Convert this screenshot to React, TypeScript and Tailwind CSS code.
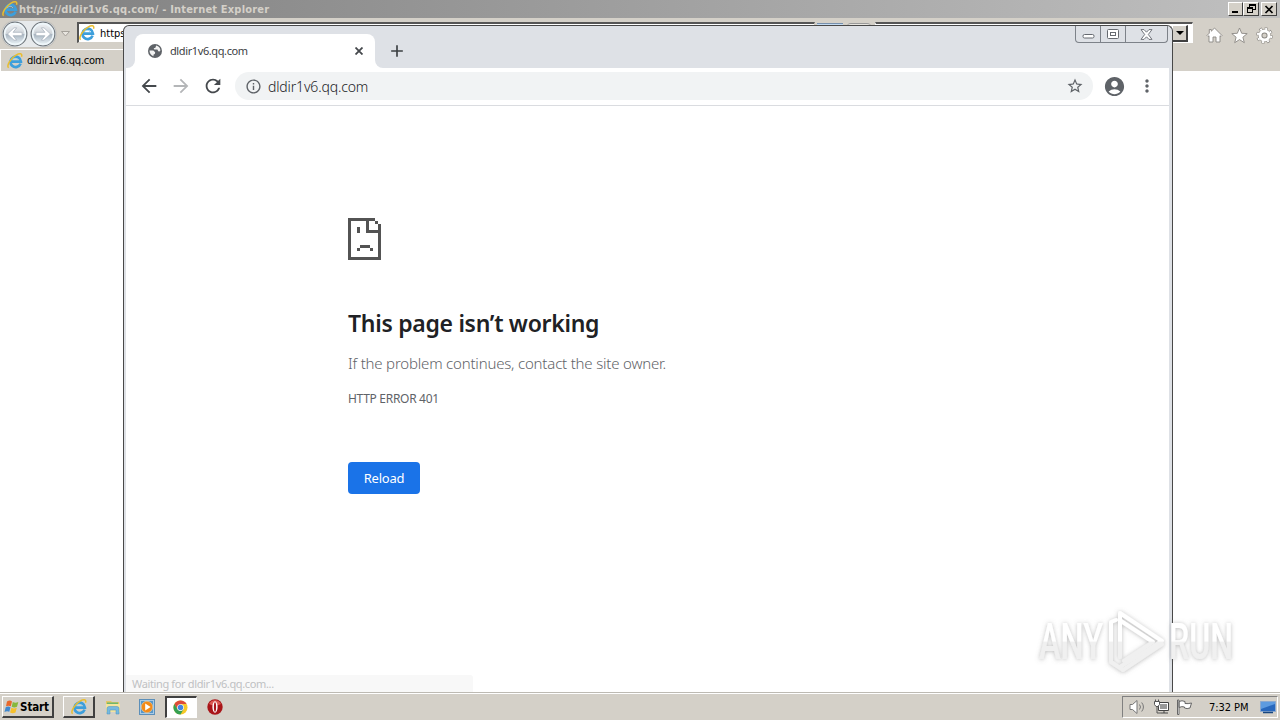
import type { ReactNode } from 'react';
import {
  MdAccountCircle,
  MdAdd,
  MdArrowBack,
  MdArrowForward,
  MdInfoOutline,
  MdMoreVert,
  MdRefresh,
  MdStarBorder,
} from 'react-icons/md';

const HOST = 'dldir1v6.qq.com';

function IeIcon({ size = 16 }: { size?: number }) {
  return (
    <svg width={size} height={size} viewBox="0 0 16 16" className="shrink-0" fill="none">
      <path d="M13.6 10.6A5.2 5.2 0 1 1 13.9 8.6H4.6" stroke="#3d9fdc" strokeWidth="2.7" />
      <path d="M5.2 7.2A3.2 3.2 0 0 1 11 7" stroke="#8ed4f5" strokeWidth="0.8" />
      <path d="M1.6 14.8C-.8 12.6 3.6 5.2 9 2.1 12.4.1 15.8.2 14.5 3.7" stroke="#e9bd2f" strokeWidth="1.5" />
    </svg>
  );
}

function NavOrb({ forward }: { forward?: boolean }) {
  return (
    <svg width="26" height="26" viewBox="0 0 26 26" className="shrink-0">
      <defs>
        <linearGradient id={forward ? 'orbF' : 'orbB'} x1="0" y1="0" x2="0" y2="1">
          <stop offset="0" stopColor="#f4f6f8" />
          <stop offset="0.48" stopColor="#d0d5da" />
          <stop offset="0.52" stopColor="#aab6c2" />
          <stop offset="1" stopColor="#f2fafd" />
        </linearGradient>
      </defs>
      <circle cx="13" cy="13" r="11.8" fill={forward ? 'url(#orbF)' : 'url(#orbB)'} stroke="#72797f" strokeWidth="1.3" />
      <circle cx="13" cy="13" r="10.4" fill="none" stroke="#eef6fa" strokeWidth="1.6" />
      <g transform={forward ? 'translate(26 0) scale(-1 1)' : undefined}>
        <path d="M5.500 13 12 6.800h2.700l-3.600 4.500h9v3.400h-9l3.600 4.500H12z" fill="#fff" stroke="#a3aeb9" strokeWidth="0.7" />
      </g>
    </svg>
  );
}

function ClassicButton({ children, className }: { children: ReactNode; className: string }) {
  return (
    <div
      className={`flex shrink-0 items-center justify-center border border-t-white border-l-white border-r-[#404040] border-b-[#404040] bg-[#d4d0c8] ${className}`}
    >
      {children}
    </div>
  );
}

function IeWindow() {
  return (
    <div className="absolute inset-x-0 top-0 h-[692px] bg-white">
      <div className="flex h-[18px] items-center bg-linear-to-r from-[#808080] to-[#c0c0c0] pr-[3px] pl-[2px]">
        <IeIcon />
        <span className="mt-[2px] ml-[1px] font-['DejaVu_Sans_Condensed','DejaVu_Sans',sans-serif] text-[11px] font-bold tracking-[0.19px] whitespace-pre text-[#d4d0c8]">
          https://{HOST}/ - Internet Explorer
        </span>
        <div className="ml-auto flex">
          <ClassicButton className="h-[14px] w-[15px]">
            <svg width="11" height="10" viewBox="0 0 11 10">
              <path d="M2 7h6v2H2z" />
            </svg>
          </ClassicButton>
          <ClassicButton className="h-[14px] w-[16px]">
            <svg width="11" height="10" viewBox="0 0 11 10" fill="none" stroke="#000" shapeRendering="crispEdges">
              <path d="M3.5 3V.5h6v5H7M3 1.5h7M1.5 3.5h5v5h-5zM1 4.5h6" />
            </svg>
          </ClassicButton>
          <ClassicButton className="ml-[2px] h-[14px] w-[16px]">
            <svg width="10" height="9" viewBox="0 0 10 9" stroke="#000" strokeWidth="1.7">
              <path d="M1.5 1 8.5 8M8.5 1 1.5 8" />
            </svg>
          </ClassicButton>
        </div>
      </div>

      <div className="flex h-[30px] items-center bg-[#d4d0c8]">
        <div className="mt-px ml-[2px] flex gap-[2px] rounded-full bg-[#e7eaec] shadow-[0_0_1px_#777]">
          <NavOrb />
          <NavOrb forward />
        </div>
        <svg width="9" height="6" viewBox="0 0 9 6" className="mt-[2px] mr-[7px] ml-[5px]">
          <path d="M.5.5h8l-4 4.5z" fill="#e8e5df" stroke="#a5a19a" />
        </svg>
        <div className="mb-[1px] flex h-[21px] w-[738px] items-center border border-t-2 border-l-2 border-[#d4d0c8] border-t-[#555] border-l-[#555] bg-white">
          <IeIcon />
          <span className="mt-[2px] ml-[5px] font-['DejaVu_Sans_Condensed','DejaVu_Sans',sans-serif] text-[11px] text-black">
            https
          </span>
        </div>
        <div className="mb-[17px] flex w-[60px] gap-[4px] pl-[2px]">
          <div className="h-[4px] w-[26px] border-t border-[#7790ad] bg-[#c5dcf3]" />
          <div className="h-[4px] w-[24px] rounded-t-sm border-t border-[#999] bg-[#e8e6e1]" />
        </div>
        <div className="mb-[1px] flex h-[21px] w-[318px] items-center justify-end border border-t-2 border-white border-t-[#555] bg-white pr-[4px]">
          <ClassicButton className="h-[17px] w-[16px] border-r-2 border-b-2">
            <svg width="8" height="4" viewBox="0 0 8 4">
              <path d="M0 0h8L4 4z" />
            </svg>
          </ClassicButton>
        </div>
        <div className="mt-[4px] ml-auto flex gap-[8px] pr-[7px]">
          <svg width="17" height="17" viewBox="0 0 17 17" fill="#fff" stroke="#8b8883" strokeWidth="0.9">
            <path d="M8.5 1 16 8.5l-1 1-1-.8V15h-4v-5H7v5H3V8.7l-1 .8-1-1 2.3-2.4V2.5h2v1.7z" />
          </svg>
          <svg width="17" height="17" viewBox="0 0 17 17" fill="#fff" stroke="#8b8883" strokeWidth="0.9">
            <path d="m8.5 1 2.2 5.3 5.5.3-4.3 3.6 1.4 5.5-4.8-3.1-4.8 3.1 1.4-5.5L.8 6.6l5.5-.3z" />
          </svg>
          <svg width="17" height="17" viewBox="0 0 17 17">
            <circle cx="8.5" cy="8.5" r="6.9" fill="none" stroke="#8b8883" strokeWidth="2.8" strokeDasharray="3 2.42" />
            <circle cx="8.5" cy="8.5" r="4.3" fill="#d4d0c8" stroke="#8b8883" strokeWidth="4.4" />
            <circle
              cx="8.5"
              cy="8.5"
              r="6.7"
              fill="none"
              stroke="#fff"
              strokeWidth="2"
              strokeDasharray="2 3.262"
              strokeDashoffset="-.5"
            />
            <circle cx="8.5" cy="8.5" r="4.5" fill="none" stroke="#fff" strokeWidth="2.9" />
          </svg>
        </div>
      </div>

      <div className="flex h-[23px] bg-[#d4d0c8]">
        <div className="mt-px flex h-[22px] w-[200px] items-center border-t border-l border-white pl-[6px]">
          <IeIcon />
          <span className="mt-[2px] ml-[4px] font-['DejaVu_Sans_Condensed','DejaVu_Sans',sans-serif] text-[11px] tracking-[-0.22px] text-black">
            {HOST}
          </span>
        </div>
      </div>
    </div>
  );
}

function CaptionButtons() {
  return (
    <div className="absolute top-0 right-[4px] flex h-[17px] w-[93px] rounded-b-[4px] border border-t-0 border-[#7d8289]">
      <div className="flex w-[25px] items-center justify-center border-r border-[#7d8289]">
        <svg width="13" height="6" viewBox="0 0 13 6" className="mt-[3px]">
          <rect x="1" y="1.5" width="11" height="3.5" rx="1.5" fill="#fff" stroke="#666a70" />
        </svg>
      </div>
      <div className="flex w-[25px] items-center justify-center border-r border-[#7d8289]">
        <svg width="12" height="10" viewBox="0 0 12 10" fill="#fff" stroke="#666a70">
          <rect x=".5" y=".5" width="11" height="9" rx="1" />
          <rect x="3.5" y="3.5" width="5" height="3" />
        </svg>
      </div>
      <div className="flex flex-1 items-center justify-center">
        <svg width="13" height="11" viewBox="0 0 13 11">
          <path
            d="M1 .6h3l2.500 2.600L9 .6h3L8.300 5.500 12 10.400H9L6.500 7.800 4 10.400H1l3.700-4.900z"
            fill="#fff"
            stroke="#666a70"
            strokeWidth="0.9"
          />
        </svg>
      </div>
    </div>
  );
}

function Globe() {
  return (
    <svg width="14" height="14" viewBox="0 0 14 14" className="shrink-0">
      <circle cx="7" cy="7" r="7" fill="#5f6368" />
      <path d="M8.200 1.600q4 1 4.200 5-1 1.700-2.200.4L9.400 5.500H6.300L5.700 4.200l1.700-.5z" fill="#f3f3f3" />
      <path d="M1.500 6.500h3.800l1.900 1.700-.4 1.700-1.200.5-.2 1.800Q1.600 10.700 1.500 6.500z" fill="#f3f3f3" />
    </svg>
  );
}

// Pixel-art page with a sad face, one unit is 3px
function SadPage() {
  return (
    <svg width="33" height="42" viewBox="0 0 33 42" fill="#535353" shapeRendering="crispEdges">
      <path d="M0 0h27v3H3v36h27V15H18V3h3v9h9V9h3v33H0zM27 3h3v3h-3zM30 6h3v3h-3z" />
      <path d="M9 9h3v6H9zM12 27h10v3H12zM9 30h3v3H9zM22 30h3v3h-3z" />
    </svg>
  );
}

function ChromeWindow() {
  return (
    <div className="absolute top-[25px] left-[123px] flex h-[667px] w-[1050px] flex-col overflow-hidden rounded-t-[6px] border border-b-0 border-[#484848] bg-[#dee1e6] pr-[3px] pl-[2px]">
      <CaptionButtons />
      <div className="flex h-[42px] shrink-0 items-end pl-[1px]">
        <div className="h-[8px] w-[8px] bg-white">
          <div className="h-full w-full rounded-br-[8px] bg-[#dee1e6]" />
        </div>
        <div className="flex h-[34px] w-[240px] items-center rounded-t-[8px] bg-white pr-[12px] pl-[13px]">
          <Globe />
          <span className="ml-[8px] font-['Noto_Sans',sans-serif] text-[11px] tracking-[-0.39px] text-[#3c4043]">
            {HOST}
          </span>
          <svg width="8" height="8" viewBox="0 0 8 8" className="ml-auto" stroke="#45484c" strokeWidth="1.8">
            <path d="M.5.500l7 7M7.500.500l-7 7" />
          </svg>
        </div>
        <div className="h-[8px] w-[8px] bg-white">
          <div className="h-full w-full rounded-bl-[8px] bg-[#dee1e6]" />
        </div>
        <MdAdd size={20} className="mb-[7px] ml-[4px] text-[#3c4043]" />
      </div>

      <div className="flex h-[38px] shrink-0 items-center border-b border-[#dadce0] bg-white pb-px pl-[12px] text-[#5f6368]">
        <MdArrowBack size={22} className="text-[#45494d]" />
        <MdArrowForward size={22} className="ml-[10px] text-[#b4b6b8]" />
        <MdRefresh size={22} className="ml-[10px] text-[#45494d]" />
        <div className="ml-[11px] flex h-[28px] w-[858px] items-center rounded-full bg-[#f1f3f4] pr-[9px] pl-[10px]">
          <MdInfoOutline size={17} />
          <span className="ml-[6px] font-['Noto_Sans',sans-serif] text-[14px] font-light tracking-[-0.15px] text-[#202124]">
            {HOST}
          </span>
          <MdStarBorder size={18} className="ml-auto" />
        </div>
        <MdAccountCircle size={23} className="ml-[10px]" />
        <MdMoreVert size={20} className="ml-[11px]" />
      </div>

      <div className="flex flex-1 flex-col items-start bg-white pt-[112px] pl-[222px] font-['Noto_Sans',sans-serif] text-[#5f6368]">
        <SadPage />
        <h1 className="mt-[47px] text-[23px] leading-[32px] font-semibold tracking-[-0.29px] whitespace-nowrap text-[#202124]">
          This page isn’t working
        </h1>
        <p className="mt-[14px] text-[15px] leading-[20px] font-light tracking-[-0.19px] whitespace-nowrap">
          If the problem continues, contact the site owner.
        </p>
        <div className="mt-[17px] text-[12px] leading-[18px] tracking-[-0.3px] whitespace-nowrap">HTTP ERROR 401</div>
        <button className="mt-[54px] h-[32px] w-[72px] rounded-[4px] bg-[#1a73e8] pt-px text-[13px] tracking-[-0.2px] text-white">
          Reload
        </button>
        <div className="mt-auto ml-[-222px] flex h-[17px] w-[347px] items-center rounded-tr-[3px] bg-[#f8f8f8] pt-[2px] pl-[6px] text-[11px] tracking-[-0.36px] text-[#bfc1c3]">
          Waiting for {HOST}...
        </div>
      </div>
    </div>
  );
}

function Watermark() {
  return (
    <svg width="252" height="80" viewBox="0 0 252 80" className="absolute top-[600px] left-[1028px]">
      <defs>
        <filter id="halo" x="-10%" y="-10%" width="120%" height="125%">
          <feDropShadow dx="0" dy="0.5" stdDeviation="2" floodColor="#777" floodOpacity="0.5" />
        </filter>
        <linearGradient id="ink" gradientUnits="userSpaceOnUse" x1="0" y1="10" x2="0" y2="72">
          <stop offset="0.5" stopColor="#fff" />
          <stop offset="0.52" stopColor="#f0f0f0" />
        </linearGradient>
      </defs>
      <g filter="url(#halo)">
        <g fill="url(#ink)" fontFamily="Roboto, sans-serif" fontSize="50" fontWeight="500">
          <text x="11" y="59" textLength="64" lengthAdjust="spacingAndGlyphs">
            ANY
          </text>
          <text x="141" y="59" textLength="64" lengthAdjust="spacingAndGlyphs">
            RUN
          </text>
        </g>
        <g fill="none" stroke="url(#ink)" strokeWidth="4" strokeLinejoin="round" strokeLinecap="round">
          <path d="M92 57V13L134 41 92 67" />
          <path d="M93 21 125 42 96 61" />
          <path d="M83 62V22L88 20M83 62 95 70 134 44" />
        </g>
      </g>
    </svg>
  );
}

function Taskbar() {
  return (
    <div className="absolute inset-x-0 bottom-0 flex h-[28px] items-center border-t border-[#bdbab3] bg-[#d4d0c8] shadow-[inset_0_1px_0_#fff]">
      <ClassicButton className="mt-[1px] ml-[2px] h-[22px] w-[52px] border-r-2 border-b-2 pr-[2px]">
        <svg width="16" height="16" viewBox="0 0 16 16" className="shrink-0">
          <path d="M3 2.5q3-1.800 5 0L6.800 7.300Q4.500 6 2 7.300z" fill="#e8682b" />
          <path d="M8.800 3q2.500 1.400 5.500 0L13 7.700q-2.800 1.400-5.300 0z" fill="#86b83c" />
          <path d="M1.700 8.200q2.500-1.300 4.800 0L5.300 12.800Q3 11.600.5 13z" fill="#3f88cf" />
          <path d="M7.400 8.800q2.500 1.300 5.400 0L11.500 13.500q-2.700 1.300-5.400 0z" fill="#f6c02c" />
        </svg>
        <span className="mt-[2px] font-['DejaVu_Sans_Condensed','DejaVu_Sans',sans-serif] text-[11.5px] font-bold tracking-[-0.1px] text-black">
          Start
        </span>
      </ClassicButton>
      <ClassicButton className="mt-[1px] ml-[9px] h-[22px] w-[32px] border-r-2 border-b-2">
        <IeIcon />
      </ClassicButton>
      <svg width="16" height="16" viewBox="0 0 16 16" className="mt-[1px] ml-[10px]">
        <path d="M1 2h5l1 1h7v10H1z" fill="#e4c765" />
        <path d="M2 3.5h11v2H2z" fill="#6eb76c" />
        <path d="M1 5h14v8H1z" fill="#f4e49d" />
        <path d="M2 9.5q0-2 2-2h8q2 0 2 2V15h-3v-4H5v4H2z" fill="#76b9df" stroke="#4b93bf" strokeWidth="0.5" />
      </svg>
      <svg width="16" height="16" viewBox="0 0 16 16" className="mt-[1px] ml-[18px]">
        <rect x=".5" y=".5" width="15" height="15" fill="#a9cbe6" stroke="#5c8fb9" />
        <rect x="2" y="2" width="12" height="12" fill="#5898ca" />
        <circle cx="8" cy="8" r="5.7" fill="#f38a18" stroke="#fbd29b" strokeWidth="0.6" />
        <path d="M6.200 4.500v7L11.600 8z" fill="#fff" />
      </svg>
      <div className="mt-[1px] ml-[10px] flex h-[22px] w-[32px] items-center justify-center border border-t-2 border-l-2 border-white border-t-[#404040] border-l-[#404040] bg-white pr-[2px]">
        <svg width="15" height="15" viewBox="0 0 16 16">
          <circle cx="8" cy="8" r="7.5" fill="#f6c928" />
          <path d="M1.500 4.250A7.500 7.500 0 0 1 14.500 4.250H8L4.700 9.800z" fill="#dd4b3a" />
          <path d="M1.500 4.250A7.500 7.500 0 0 0 8 15.500L11.300 9.900H4.750z" fill="#35a052" />
          <circle cx="8" cy="8" r="3.6" fill="#fff" />
          <circle cx="8" cy="8" r="2.9" fill="#4285e0" />
        </svg>
      </div>
      <svg width="16" height="16" viewBox="0 0 16 16" className="mt-[1px] ml-[10px]">
        <circle cx="8" cy="8" r="7.7" fill="#a91519" />
        <path d="M2 5a6.600 6.600 0 0 1 12 0Q8 8.500 2 5z" fill="#dc5b54" />
        <ellipse cx="8" cy="8" rx="2.6" ry="5.7" fill="#fff" />
        <ellipse cx="8" cy="8" rx="1.1" ry="4.8" fill="#a91519" />
      </svg>

      <div className="mt-[1px] mr-[2px] ml-auto flex h-[22px] w-[156px] items-center border border-white border-t-[#808080] border-l-[#808080] pl-[6px]">
        <svg width="17" height="16" viewBox="0 0 17 16" fill="none" stroke="#777">
          <path d="M1 5.500h2.500L8 1.500v13L3.500 10.500H1z" fill="#fff" />
          <path d="M10.500 5.500q2 2.500 0 5M12.700 3.500q3.500 4.500 0 9" />
        </svg>
        <svg width="17" height="16" viewBox="0 0 17 16" className="ml-[7px]" fill="none" stroke="#555">
          <path d="M5.500 3.500h10v8h-10z" fill="#fff" stroke="#444" />
          <path d="M7 5h7v5H7z" fill="#999" stroke="none" />
          <path d="M8 14h7M11 12v2" stroke="#444" />
          <path d="M1.500 2.500h5v3l-1.500 2H3l-1.500-2zM2.500.5v2M5.500.5v2" fill="#fff" />
          <path d="M4 7.500v6.500h4" />
        </svg>
        <svg width="17" height="16" viewBox="0 0 17 16" className="ml-[6px]" fill="#fff" stroke="#666">
          <path d="M1.500 1v14.500h1.500V1zM3 2.500q3-1.500 6 0v2q3 .5 6.500-.5l-1.500 5q-3 1.200-5.500 0v-1Q6 7 3 8.500z" />
        </svg>
        <span className="mt-[2px] ml-[16px] font-['DejaVu_Sans_Condensed','DejaVu_Sans',sans-serif] text-[11px] tracking-[-0.05px] whitespace-nowrap text-black">
          7:32 PM
        </span>
        <svg width="16" height="14" viewBox="0 0 16 14" className="mr-[1px] ml-auto">
          <path d="M.5 1.500h15v10H.5z" fill="#2868bd" stroke="#8ba9cf" />
          <path d="M1 2h14v2L1 9z" fill="#5d9be0" />
          <path d="M3 12.500h10" stroke="#164680" strokeWidth="1.5" />
        </svg>
      </div>
    </div>
  );
}

export default function App() {
  return (
    <div className="relative h-[720px] w-[1280px] overflow-hidden bg-white">
      <IeWindow />
      <ChromeWindow />
      <Watermark />
      <Taskbar />
    </div>
  );
}
